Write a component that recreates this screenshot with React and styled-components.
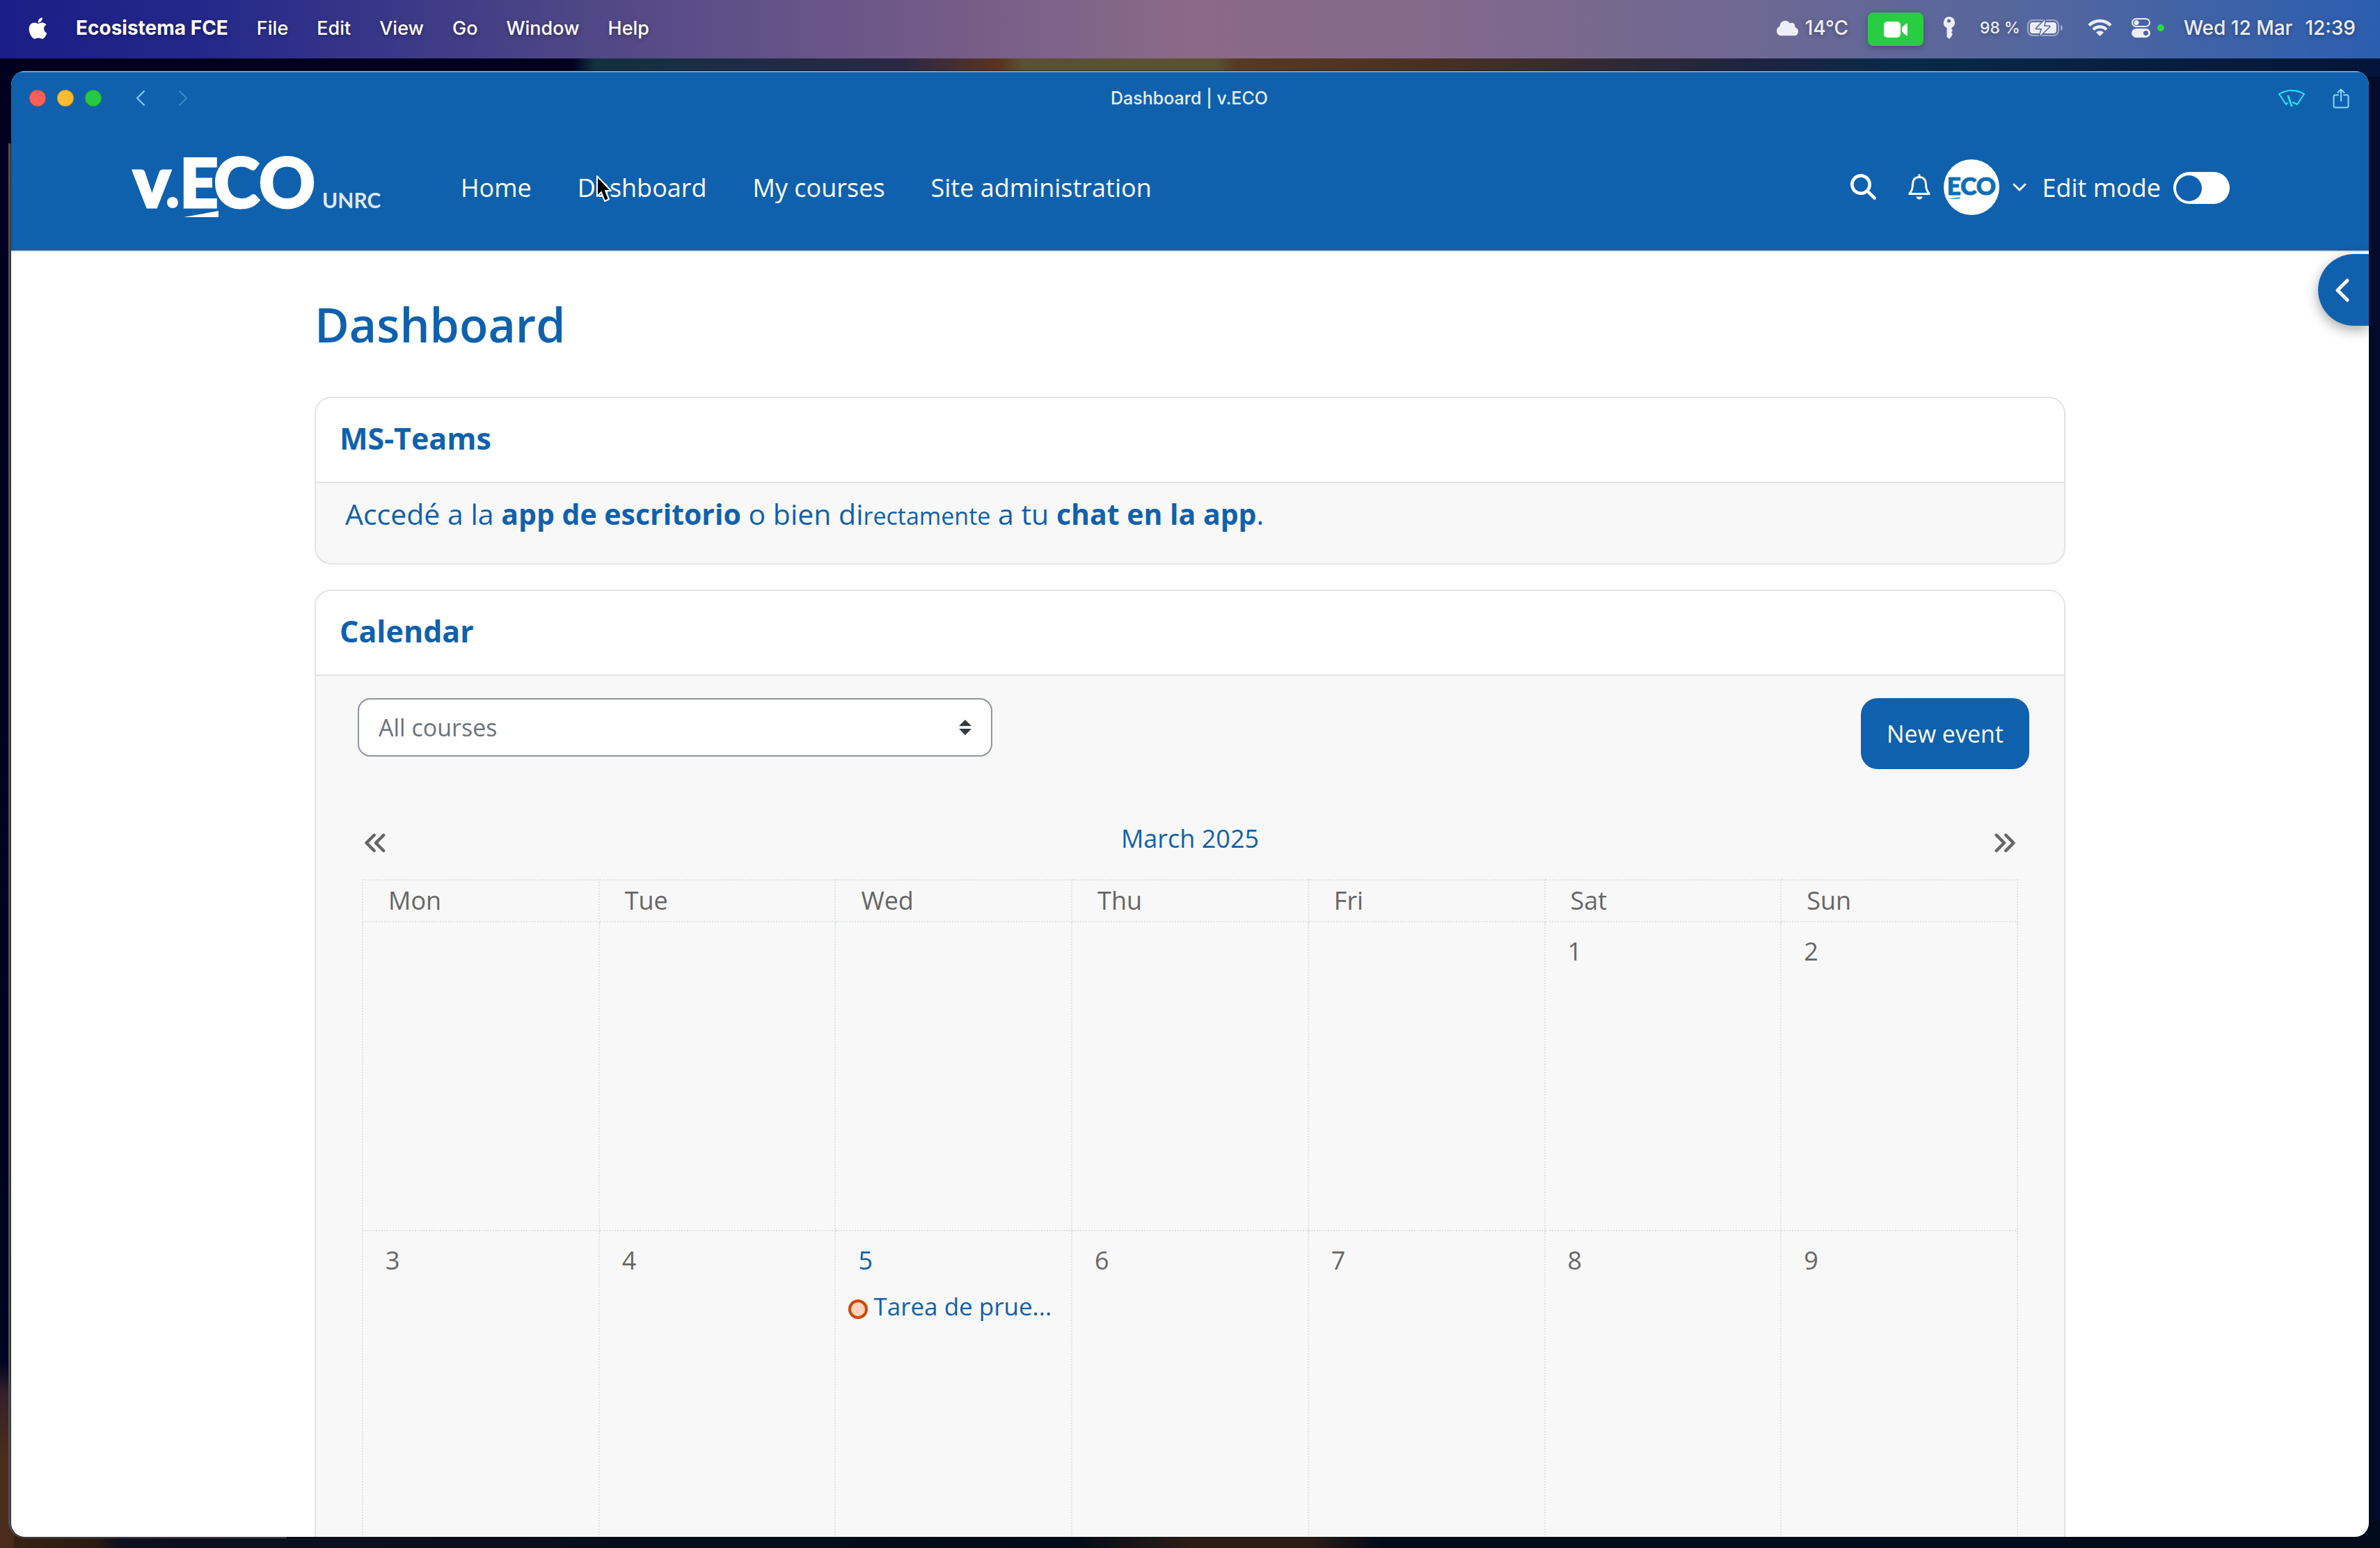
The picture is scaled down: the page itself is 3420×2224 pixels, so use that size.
import React from "react";
import styled, { createGlobalStyle } from "styled-components";
import { FaAnglesLeft, FaAnglesRight, FaApple, FaCloud, FaMagnifyingGlass } from "react-icons/fa6";

const blue = "#0f61ad";
const ink = "#666666";
const line = "#e3e3e3";
const uiFont = `Inter, "Liberation Sans", sans-serif`;
const bodyFont = `"Open Sans", "Noto Sans", sans-serif`;

const GlobalStyle = createGlobalStyle`
  *, *::before, *::after { box-sizing: border-box; }
  html, body { margin: 0; padding: 0; overflow: hidden; }
  button, select, input { font: inherit; margin: 0; }
`;

const Desktop = styled.div`
  position: relative;
  display: flex;
  flex-direction: column;
  height: 100vh;
  overflow: hidden;
  isolation: isolate;
  font-family: ${bodyFont};
  background:
    linear-gradient(90deg, #00001f 0%, #00001f 24%, #12303f 25%, #1c2b44 31%, #2d2744 38%, #5b3320 42%, #5c5033 43%, #5c5033 51%, #553a24 52%, #4a3023 60%, #1d2340 74%, #082a48 80%, #04143a 100%) top / 100% 110px no-repeat,
    linear-gradient(180deg, #00001f 0%, #000424 88%, #33202a 90%, #4a2c1c 94%, #4a2c1c 100%) left / 20px 100% no-repeat,
    linear-gradient(90deg, #3a2314 0%, #2a1a12 4%, #0c101f 5%, #020b18 45%, #2b1c16 50%, #2b1c16 55%, #020b18 58%, #020b1c 100%) bottom / 100% 40px no-repeat,
    #020c2a;
`;

const MenuBar = styled.header`
  display: flex;
  align-items: center;
  justify-content: space-between;
  height: 84px;
  flex: none;
  padding: 0 35px 4px 41px;
  color: #ffffff;
  font-family: ${uiFont};
  font-size: 27px;
  font-weight: 500;
  white-space: nowrap;
  text-shadow: 0 2px 6px rgba(0, 0, 0, 0.3);
  background: linear-gradient(90deg, #1b1e86 0%, #23278a 8%, #4b4485 23%, #5e4e88 30%, #8b6a88 50%, #86698a 58%, #6f6892 73%, #52669f 86%, #2b5eb0 100%);
`;

const Menus = styled.nav`
  display: flex;
  align-items: center;
  gap: 41px;
`;

const MenuItem = styled.button`
  border: 0;
  padding: 0;
  background: none;
  color: inherit;
  font-size: ${(p) => (p.$strong ? 28 : 27)}px;
  font-weight: ${(p) => (p.$strong ? 700 : 500)};
  text-shadow: inherit;
  display: flex;
`;

const AppleIcon = styled(FaApple)`
  width: 27px;
  height: 35px;
`;

const Status = styled.div`
  display: flex;
  align-items: center;
  gap: 28px;
  color: #eeeef6;
`;

const StatusItem = styled.div`
  display: flex;
  align-items: center;
  gap: ${(p) => p.$gap || 10}px;
  padding: 0 ${(p) => p.$inset || 0}px;
  font-size: ${(p) => (p.$small ? 23 : 28)}px;
`;

const CameraBadge = styled.div`
  display: flex;
  align-items: center;
  justify-content: center;
  width: 80px;
  height: 48px;
  margin-top: 4px;
  border-radius: 8px;
  background: #28cd41;
  box-shadow: 0 3px 8px rgba(0, 0, 0, 0.25);
`;

const GreenDot = styled.span`
  width: 10px;
  height: 10px;
  border-radius: 50%;
  background: #32d74b;
`;

const BackWindow = styled.div`
  position: absolute;
  z-index: -1;
  left: 12px;
  top: 206px;
  bottom: 14px;
  width: 400px;
  border-radius: 0 0 0 24px;
  background: #505052;
`;

const Window = styled.div`
  position: relative;
  display: flex;
  flex-direction: column;
  flex: 1;
  min-height: 0;
  margin: 18px 16px 16px;
  border-radius: 20px;
  overflow: hidden;
  background: #ffffff;
  box-shadow: 0 0 0 1px rgba(0, 0, 0, 0.5);
`;

const TitleBar = styled.div`
  display: grid;
  grid-template-columns: 1fr auto 1fr;
  align-items: center;
  flex: none;
  height: 78px;
  padding: 0 28px 0 26px;
  background: ${blue};
  box-shadow: inset 0 2px 0 #6ea0d2;
  font-family: ${uiFont};
`;

const TitleLeft = styled.div`
  display: flex;
  align-items: center;
  gap: 46px;
`;

const Lights = styled.div`
  display: flex;
  gap: 16px;
`;

const Light = styled.button`
  width: 24px;
  height: 24px;
  padding: 0;
  border: 1px solid rgba(0, 0, 0, 0.18);
  border-radius: 50%;
  background: ${(p) => p.$color};
`;

const IconButton = styled.button`
  display: flex;
  padding: 0;
  border: 0;
  background: none;
  color: ${(p) => p.$color || "#ffffff"};
`;

const WindowTitle = styled.div`
  color: #e8effa;
  font-size: 25px;
  font-weight: 500;
`;

const TitleRight = styled.div`
  display: flex;
  align-items: center;
  justify-content: flex-end;
  gap: 40px;
`;

const SiteHeader = styled.header`
  display: flex;
  align-items: center;
  justify-content: space-between;
  flex: none;
  height: 182px;
  padding: 0 200px 0 174px;
  border-bottom: 2px solid #e9e3e4;
  background: ${blue};
  color: #ffffff;
  font-size: 36px;
  line-height: 48px;
  white-space: nowrap;
`;

const HeaderGroup = styled.div`
  display: flex;
  align-items: center;
  gap: ${(p) => p.$gap}px;
  padding-bottom: ${(p) => p.$raise || 0}px;
`;

const SiteNav = styled.nav`
  display: flex;
  gap: 66px;
`;

const NavLink = styled.a`
  color: inherit;
  text-decoration: none;
`;

const AvatarButton = styled(IconButton)`
  align-items: center;
  gap: 19px;
`;

const EditMode = styled.label`
  display: flex;
  align-items: center;
  gap: 18px;
`;

const Toggle = styled.input`
  appearance: none;
  display: flex;
  align-items: center;
  width: 81px;
  height: 46px;
  padding: 0 4px;
  border-radius: 23px;
  background: #ffffff;
  &::before {
    content: "";
    width: 37px;
    height: 37px;
    border-radius: 50%;
    background: ${blue};
  }
`;

const DrawerToggle = styled.button`
  position: absolute;
  top: 263px;
  right: 0;
  display: flex;
  align-items: center;
  width: 73px;
  height: 103px;
  padding: 0 0 0 24px;
  border: 0;
  border-radius: 52px 0 0 52px;
  background: ${blue};
  color: #ffffff;
  box-shadow: 0 6px 18px rgba(0, 0, 0, 0.35);
`;

const Main = styled.main`
  display: flex;
  flex-direction: column;
  flex: none;
  padding: 62px 436px;
`;

const PageTitle = styled.h1`
  margin: 0 0 62px;
  color: ${blue};
  font-size: 68px;
  font-weight: 600;
  line-height: 84px;
`;

const Card = styled.section`
  margin-bottom: 36px;
  border: 2px solid ${line};
  border-radius: 24px;
  overflow: hidden;
  background: #f8f8f8;
`;

const CardTitle = styled.h2`
  margin: 0;
  padding: 28px 34px 32px;
  border-bottom: 2px solid ${line};
  background: #ffffff;
  color: ${blue};
  font-size: 43px;
  font-weight: 700;
  line-height: 60px;
`;

const TeamsText = styled.p`
  margin: 0;
  padding: 14px 42px 38px;
  color: ${blue};
  font-size: 41px;
  line-height: 60px;
  small { font-size: 34px; }
  a { color: inherit; font-weight: 700; text-decoration: none; }
`;

const Toolbar = styled.div`
  display: flex;
  justify-content: space-between;
  align-items: flex-start;
  padding: 32px 50px 0 60px;
`;

const SelectBox = styled.div`
  position: relative;
  width: 912px;
`;

const CourseSelect = styled.select`
  appearance: none;
  display: block;
  width: 100%;
  height: 84px;
  padding: 0 80px 0 28px;
  border: 2px solid #8f959e;
  border-radius: 18px;
  background: #ffffff;
  color: #6a737b;
  font-size: 34px;
`;

const Caret = styled.svg`
  position: absolute;
  right: 30px;
  top: 31px;
  pointer-events: none;
`;

const NewEvent = styled.button`
  width: 242px;
  height: 102px;
  padding: 0;
  border: 0;
  border-radius: 24px;
  background: ${blue};
  color: #ffffff;
  font-size: 34px;
`;

const CalendarArea = styled.div`
  padding: 76px 66px 60px;
  font-size: 36px;
  line-height: 48px;
`;

const MonthRow = styled.div`
  display: flex;
  justify-content: space-between;
  align-items: flex-end;
  margin-bottom: 34px;
  padding: 0 2px;
`;

const Month = styled.h3`
  margin: 0;
  color: ${blue};
  font-size: 36px;
  font-weight: 400;
`;

const Grid = styled.table`
  width: 100%;
  table-layout: fixed;
  border-collapse: collapse;
  color: ${ink};
`;

const HeadCell = styled.th`
  padding: 5px 36px;
  border: 2px dotted #dee2e6;
  text-align: left;
  font-weight: 400;
`;

const DayCell = styled.td`
  height: 444px;
  padding: 18px 18px 0;
  border: 2px dotted #dee2e6;
  vertical-align: top;
`;

const DayNumber = styled.div`
  padding-left: 14px;
  color: ${(p) => (p.$linked ? blue : ink)};
`;

const EventLink = styled.a`
  display: flex;
  align-items: center;
  gap: 8px;
  margin-top: 18px;
  color: ${blue};
  font-size: 35px;
  text-decoration: none;
  white-space: nowrap;
`;

const EventDot = styled.span`
  flex: none;
  width: 28px;
  height: 28px;
  margin-top: 8px;
  border: 4px solid #ca4903;
  border-radius: 50%;
  background: #ffd3bd;
`;

const Pointer = styled.svg`
  position: absolute;
  left: 855px;
  top: 250px;
`;

const LogoDrawing = styled.svg`
  overflow: visible;
`;

const menuNames = ["File", "Edit", "View", "Go", "Window", "Help"];
const siteLinks = ["Home", "Dashboard", "My courses", "Site administration"];
const weekdays = ["Mon", "Tue", "Wed", "Thu", "Fri", "Sat", "Sun"];
const weeks = [
  [null, null, null, null, null, 1, 2],
  [3, 4, 5, 6, 7, 8, 9],
];
const events = { 5: "Tarea de prue..." };

const Logo = () => (
  <LogoDrawing width="358" height="90" viewBox="0 0 358 90" fill="#ffffff" role="img" aria-label="v.ECO UNRC">
    <g fontFamily="Lato, sans-serif" fontWeight="900" stroke="#ffffff" strokeWidth="3">
      <text x="1" y="73" fontSize="102">v</text>
      <text x="68" y="73" fontSize="97">E</text>
      <text x="117" y="73" fontSize="100">C</text>
      <text x="182" y="73" fontSize="100">O</text>
    </g>
    <circle cx="58" cy="66" r="8" />
    <path d="M74 87 L124 78 L124 87 Z" />
    <text x="273" y="74" fontFamily="Lato, sans-serif" fontWeight="700" fontSize="30" fill="#dfe8f8">UNRC</text>
  </LogoDrawing>
);

const Avatar = () => (
  <svg width="80" height="80" viewBox="0 0 80 80">
    <circle cx="40" cy="40" r="40" fill="#ffffff" />
    <text x="40" y="51" textAnchor="middle" fontFamily="Lato, sans-serif" fontWeight="900" fontSize="35" fill="#0d6fb6" stroke="#0d6fb6">ECO</text>
    <path d="M5 57 L23 54 L23 57 Z" fill="#3fb0e6" />
  </svg>
);

const CameraIcon = () => (
  <svg width="34" height="23" viewBox="0 0 34 23" fill="#ffffff">
    <rect width="24" height="23" rx="5" />
    <path d="M26 8.500 L32 3 Q34 2 34 4 V19 Q34 21 32 20 L26 14.500 Z" />
  </svg>
);

const KeyIcon = () => (
  <svg width="17" height="32" viewBox="0 0 17 32" fill="#eeeef6">
    <path fillRule="evenodd" d="M8.500 0 A8.500 8.500 0 0 1 12.500 16 V18 L14 20 L12 22.500 L14 25 L12.500 27 V28 L9 32 L5.500 29 V16 A8.500 8.500 0 0 1 8.500 0 Z M8.500 3.500 A2.500 2.500 0 1 0 8.500 8.500 A2.500 2.500 0 1 0 8.500 3.500 Z" />
  </svg>
);

const BatteryIcon = () => (
  <svg width="51" height="26" viewBox="0 0 51 26">
    <rect x="1" y="2" width="44" height="22" rx="7" fill="none" stroke="#eeeef6" strokeOpacity="0.5" strokeWidth="2" />
    <path d="M48 9 Q51 10 51 13 Q51 16 48 17 Z" fill="#eeeef6" fillOpacity="0.5" />
    <rect x="4" y="5" width="38" height="16" rx="4" fill="#eeeef6" />
    <path d="M26 1 L13 14 H21 L18 25 L32 11 H24 Z" fill="#eeeef6" stroke="#53659f" strokeWidth="3" strokeLinejoin="round" paintOrder="stroke" />
  </svg>
);

const WifiIcon = () => (
  <svg width="35" height="26" viewBox="0 0 35 26" fill="none" stroke="#eeeef6" strokeWidth="4.500">
    <path d="M2 9.500 A22 22 0 0 1 33 9.500" />
    <path d="M8 15.500 A13.500 13.500 0 0 1 27 15.500" />
    <path d="M17.500 25 L12 19.500 A8 8 0 0 1 23 19.500 Z" fill="#eeeef6" stroke="none" />
  </svg>
);

const ControlIcon = () => (
  <svg width="27" height="28" viewBox="0 0 27 28">
    <rect x="1" y="1" width="25" height="11" rx="5.500" fill="none" stroke="#eeeef6" strokeWidth="2" />
    <circle cx="7" cy="6.500" r="3.500" fill="#eeeef6" />
    <rect x="0" y="15" width="27" height="13" rx="6.500" fill="#eeeef6" />
    <circle cx="20.500" cy="21.500" r="3.500" fill="#4a65a3" />
  </svg>
);

const Chevron = ({ w, h, d, stroke = 3 }) => (
  <svg width={w} height={h} viewBox={`0 0 ${w} ${h}`} fill="none" stroke="currentColor" strokeWidth={stroke} strokeLinecap="round" strokeLinejoin="round">
    <path d={d} />
  </svg>
);

const WiperIcon = () => (
  <svg width="38" height="25" viewBox="0 0 38 25" fill="none" stroke="#25eaf8" strokeWidth="2" strokeLinejoin="round" strokeLinecap="round">
    <path d="M13 19 L11 21 L1 6 Q19 -4 37 6 L27 21 L21 18" />
    <path d="M14 9 L19 23" strokeWidth="2.500" />
  </svg>
);

const ShareIcon = () => (
  <svg width="24" height="29" viewBox="0 0 24 29" fill="none" stroke="#8fd6fa" strokeWidth="2" strokeLinecap="round" strokeLinejoin="round">
    <path d="M8 9.500 H4 Q1.500 9.500 1.500 12 V25 Q1.500 27.500 4 27.500 H20 Q22.500 27.500 22.500 25 V12 Q22.500 9.500 20 9.500 H16" />
    <path d="M12 18 V2 M7.500 6 L12 1.500 L16.500 6" />
  </svg>
);

const BellIcon = () => (
  <svg width="32" height="37" viewBox="0 0 32 37" fill="none" stroke="#ffffff" strokeWidth="3" strokeLinejoin="round" strokeLinecap="round">
    <path d="M16 1.500 V4 M16 4.500 C9 4.500 6.500 9.500 6.500 15 C6.500 22 4.500 24.500 1.800 28.500 H30.200 C27.500 24.500 25.500 22 25.500 15 C25.500 9.500 23 4.500 16 4.500 Z" />
    <path d="M11.500 32.500 H20.500 Q19.500 36.500 16 36.500 Q12.500 36.500 11.500 32.500 Z" fill="#ffffff" stroke="none" />
  </svg>
);

export default function App() {
  return (
    <Desktop>
      <GlobalStyle />
      <BackWindow />
      <MenuBar>
        <Menus aria-label="Menu bar">
          <MenuItem aria-label="Apple menu"><AppleIcon /></MenuItem>
          <MenuItem $strong>Ecosistema FCE</MenuItem>
          {menuNames.map((name) => <MenuItem key={name}>{name}</MenuItem>)}
        </Menus>
        <Status>
          <StatusItem><FaCloud size={31} />14°C</StatusItem>
          <CameraBadge><CameraIcon /></CameraBadge>
          <KeyIcon />
          <StatusItem $small $inset={8}>98 %<BatteryIcon /></StatusItem>
          <WifiIcon />
          <StatusItem><ControlIcon /><GreenDot /></StatusItem>
          <StatusItem $gap={18}><span>Wed 12 Mar</span><span>12:39</span></StatusItem>
        </Status>
      </MenuBar>

      <Window>
        <TitleBar>
          <TitleLeft>
            <Lights>
              <Light $color="#ff5f57" aria-label="Close" />
              <Light $color="#febc2e" aria-label="Minimize" />
              <Light $color="#28c840" aria-label="Zoom" />
            </Lights>
            <IconButton $color="#84d2fb" aria-label="Back"><Chevron w={18} h={24} stroke={2} d="M15 2 L5 12 L15 22" /></IconButton>
            <IconButton $color="#3c86cc" aria-label="Forward"><Chevron w={14} h={24} stroke={2} d="M2 2 L12 12 L2 22" /></IconButton>
          </TitleLeft>
          <WindowTitle>Dashboard | v.ECO</WindowTitle>
          <TitleRight>
            <IconButton aria-label="Clear"><WiperIcon /></IconButton>
            <IconButton aria-label="Share"><ShareIcon /></IconButton>
          </TitleRight>
        </TitleBar>

        <SiteHeader>
          <HeaderGroup $gap={114}>
            <Logo />
            <SiteNav>
              {siteLinks.map((name) => <NavLink key={name} href="#">{name}</NavLink>)}
            </SiteNav>
          </HeaderGroup>
          <HeaderGroup $gap={22}>
            <HeaderGroup $gap={19} $raise={3}>
              <HeaderGroup $gap={46}>
                <IconButton aria-label="Search"><FaMagnifyingGlass size={37} /></IconButton>
                <IconButton aria-label="Notifications"><BellIcon /></IconButton>
              </HeaderGroup>
              <AvatarButton aria-label="User menu">
                <Avatar />
                <Chevron w={20} h={12} stroke={3} d="M2 2 L10 10 L18 2" />
              </AvatarButton>
            </HeaderGroup>
            <EditMode htmlFor="edit-mode">
              Edit mode
              <Toggle type="checkbox" id="edit-mode" />
            </EditMode>
          </HeaderGroup>
        </SiteHeader>

        <Main>
          <PageTitle>Dashboard</PageTitle>
          <Card>
            <CardTitle>MS-Teams</CardTitle>
            <TeamsText>
              Accedé a la <a href="#">app de escritorio</a> o bien di<small>rectamente</small> a tu <a href="#">chat en la app</a>.
            </TeamsText>
          </Card>
          <Card>
            <CardTitle>Calendar</CardTitle>
            <Toolbar>
              <SelectBox>
                <CourseSelect aria-label="Course" defaultValue="all">
                  <option value="all">All courses</option>
                </CourseSelect>
                <Caret width="18" height="22" viewBox="0 0 18 22" fill="#343a40">
                  <path d="M9 0 L18 9 H0 Z M9 22 L18 13 H0 Z" />
                </Caret>
              </SelectBox>
              <NewEvent>New event</NewEvent>
            </Toolbar>
            <CalendarArea>
              <MonthRow>
                <IconButton $color={ink} aria-label="Previous month"><FaAnglesLeft size={36} /></IconButton>
                <Month>March 2025</Month>
                <IconButton $color={ink} aria-label="Next month"><FaAnglesRight size={36} /></IconButton>
              </MonthRow>
              <Grid>
                <thead>
                  <tr>{weekdays.map((d) => <HeadCell key={d} scope="col">{d}</HeadCell>)}</tr>
                </thead>
                <tbody>
                  {weeks.map((week, i) => (
                    <tr key={i}>
                      {week.map((day, j) => (
                        <DayCell key={j}>
                          {day && <DayNumber $linked={Boolean(events[day])}>{day}</DayNumber>}
                          {events[day] && <EventLink href="#"><EventDot />{events[day]}</EventLink>}
                        </DayCell>
                      ))}
                    </tr>
                  ))}
                </tbody>
              </Grid>
            </CalendarArea>
          </Card>
        </Main>
        <DrawerToggle aria-label="Open block drawer"><Chevron w={22} h={36} stroke={5} d="M18 4 L4 18 L18 32" /></DrawerToggle>
      </Window>

      <Pointer width="26" height="44" viewBox="0 0 26 44" fill="#000000" stroke="#ffffff" strokeWidth="2" strokeLinejoin="round">
        <path d="M3 3 V32 L9 26 L14 39 L20 36 L15 24 H23 Z" />
      </Pointer>
    </Desktop>
  );
}
